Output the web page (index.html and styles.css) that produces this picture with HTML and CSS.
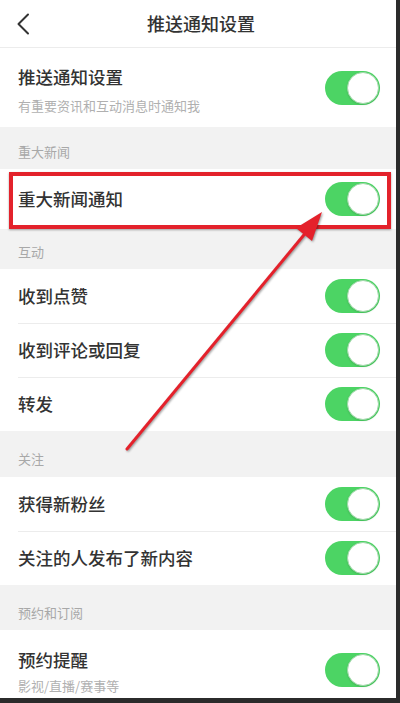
FILE: index.html
```html
<!DOCTYPE html>
<html lang="zh-CN">
<head>
<meta charset="utf-8">
<title>推送通知设置</title>
<link rel="stylesheet" href="styles.css">
</head>
<body>
<div class="screen">
  <header class="nav">
    <svg class="back" width="14" height="22" viewBox="0 0 14 22"><path d="M12 1.5 L2.5 11 L12 20.5" fill="none" stroke="#333" stroke-width="2" stroke-linecap="round" stroke-linejoin="round"/></svg>
    <div class="nav-title">推送通知设置</div>
  </header>

  <div class="row row-tall">
    <div class="text">
      <div class="title">推送通知设置</div>
      <div class="sub">有重要资讯和互动消息时通知我</div>
    </div>
    <span class="switch"><span class="knob"></span></span>
  </div>

  <div class="section s1">重大新闻</div>
  <div class="row row-hl">
    <div class="title">重大新闻通知</div>
    <span class="switch"><span class="knob"></span></span>
  </div>

  <div class="section s2">互动</div>
  <div class="group">
    <div class="row"><div class="title">收到点赞</div><span class="switch"><span class="knob"></span></span></div>
    <div class="row"><div class="title">收到评论或回复</div><span class="switch"><span class="knob"></span></span></div>
    <div class="row"><div class="title">转发</div><span class="switch"><span class="knob"></span></span></div>
  </div>

  <div class="section s3">关注</div>
  <div class="group">
    <div class="row"><div class="title">获得新粉丝</div><span class="switch"><span class="knob"></span></span></div>
    <div class="row"><div class="title">关注的人发布了新内容</div><span class="switch"><span class="knob"></span></span></div>
  </div>

  <div class="section s4">预约和订阅</div>
  <div class="row row-last">
    <div class="text">
      <div class="title">预约提醒</div>
      <div class="sub">影视/直播/赛事等</div>
    </div>
    <span class="switch"><span class="knob"></span></span>
  </div>

  <div class="hl-box"></div>
  <svg class="arrow" width="400" height="703" viewBox="0 0 400 703">
    <g class="arrow-g">
      <line x1="127" y1="449" x2="308" y2="230" stroke="#e4212b" stroke-width="3" stroke-linecap="round"/>
      <polygon points="322,212 312,241 296,228" fill="#e4212b"/>
    </g>
  </svg>
</div>
</body>
</html>
```

FILE: styles.css
```css
* { box-sizing: border-box; }
html, body { margin: 0; padding: 0; }
body {
  width: 400px;
  height: 703px;
  overflow: hidden;
  background: #2b2b2b;
  font-family: "Noto Sans CJK SC", "Noto Sans", sans-serif;
  color: #333;
}
.screen {
  position: relative;
  width: 396px;
  height: 698px;
  background: #f2f2f2;
  overflow: hidden;
}
.nav {
  position: relative;
  height: 48px;
  background: #fff;
  border-bottom: 1px solid #ececec;
  display: flex;
  align-items: center;
  justify-content: center;
}
.back {
  position: absolute;
  left: 16px;
  top: 13px;
}
.nav-title {
  font-size: 18px;
  font-weight: 500;
  color: #333;
  line-height: 24px;
  margin-top: -2px;
  padding-left: 6px;
}
.row {
  display: flex;
  align-items: center;
  justify-content: space-between;
  height: 54px;
  padding: 0 16px 0 18px;
  background: #fff;
}
.group .row + .row {
  background: linear-gradient(to right, #fff 0, #fff 18px, #ececec 18px) top / 100% 1px no-repeat, #fff;
}
.title {
  font-size: 17.5px;
  font-weight: 500;
  line-height: 24px;
  color: #333;
}
.sub {
  font-size: 13px;
  line-height: 18px;
  color: #b0b0b0;
  margin-top: 8px;
}
.row-tall {
  height: 79px;
}
.row-tall .text { margin-top: 4px; }
.row-hl { height: 60px; }
.row-last {
  height: 68px;
  align-items: flex-start;
}
.row-last .text { margin-top: 18px; }
.row-last .sub { margin-top: 5px; }
.row-last .switch { margin-top: 23px; }
.section {
  font-size: 13px;
  line-height: 18px;
  color: #a8a8a8;
  padding: 0 18px 8px;
  display: flex;
  align-items: flex-end;
}
.s1 { height: 42px; padding-bottom: 8px; }
.s2 { height: 40px; padding-bottom: 8px; }
.s3 { height: 46px; padding-bottom: 9px; }
.s4 { height: 45px; padding-bottom: 8px; }
.switch {
  position: relative;
  flex: none;
  width: 55px;
  height: 34px;
  border-radius: 17px;
  background: #4cd464;
}
.knob {
  position: absolute;
  right: 1px;
  top: 1px;
  width: 32px;
  height: 32px;
  border-radius: 50%;
  background: #fff;
  border: 1px solid #9fd8a8;
  box-shadow: 0 1px 2px rgba(0,0,0,0.12);
}
.hl-box {
  position: absolute;
  left: 9px;
  top: 172px;
  width: 382px;
  height: 57px;
  border: 4px solid #e3222b;
  box-shadow: 0 1px 2px rgba(0,0,0,0.35);
}
.arrow {
  position: absolute;
  left: 0;
  top: 0;
  pointer-events: none;
}
.arrow-g {
  filter: drop-shadow(1px 1px 1px rgba(0,0,0,0.4));
}
```
